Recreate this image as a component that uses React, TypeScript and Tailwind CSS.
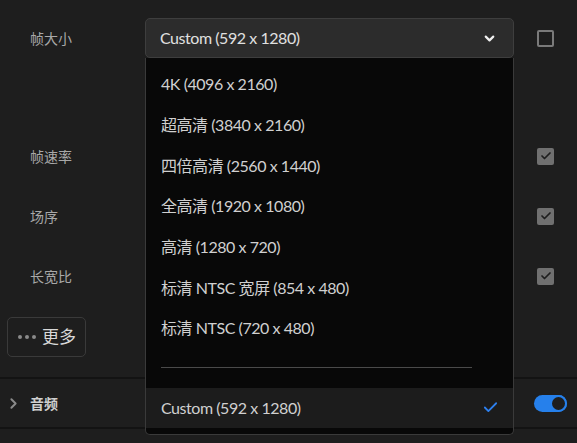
import React from "react";
import { ChevronDown, ChevronRight, Check } from "lucide-react";

const FONT = {
  fontFamily: 'Lato, "Noto Sans CJK SC", sans-serif',
};

const items = [
  "4K (4096 x 2160)",
  "超高清 (3840 x 2160)",
  "四倍高清 (2560 x 1440)",
  "全高清 (1920 x 1080)",
  "高清 (1280 x 720)",
  "标清 NTSC 宽屏 (854 x 480)",
  "标清 NTSC (720 x 480)",
];

function CheckedBox() {
  return (
    <div className="w-[17px] h-[17px] rounded-[2px] bg-[#707070] flex items-center justify-center">
      <Check size={12} strokeWidth={3.5} color="#1e1e1e" />
    </div>
  );
}

function Row({ label, h, children }: { label?: string; h: string; children?: React.ReactNode }) {
  return (
    <div className={`flex items-center ${h}`}>
      <div className="w-[145px] pl-[30px] text-[14px] text-[#a8a8a8]">{label}</div>
      <div className="flex-1" />
      <div className="w-[63px] pl-[23px]">{children}</div>
    </div>
  );
}

export default function App() {
  return (
    <div className="relative w-[577px] h-[443px] bg-[#1e1e1e] overflow-hidden" style={FONT}>
      <div className="flex flex-col">
        <div className="flex items-center h-[76px]">
          <div className="w-[145px] pl-[30px] text-[14px] text-[#a8a8a8]">帧大小</div>
          <div className="w-[369px] h-[40px] rounded-[5px] bg-[#2c2c2c] border border-[#3e3e3e] flex items-center pl-[14px] pr-[16px]">
            <span className="flex-1 text-[16px] tracking-[-0.45px] text-[#e0e0e0]">Custom (592 x 1280)</span>
            <ChevronDown size={15} strokeWidth={3.5} color="#f0f0f0" />
          </div>
          <div className="pl-[23px]">
            <div className="w-[17px] h-[17px] rounded-[2px] border-2 border-[#7a7a7a]" />
          </div>
        </div>
        <div className="h-[50px]" />
        <Row label="帧速率" h="h-[60px]"><CheckedBox /></Row>
        <Row label="场序" h="h-[60px]"><CheckedBox /></Row>
        <Row label="长宽比" h="h-[60px]"><CheckedBox /></Row>
        <div className="h-[71px] flex items-start pt-[11px] pl-[7px]">
          <div className="h-[40px] w-[79px] rounded-[5px] border border-[#3a3a3a] flex items-center pl-[10px] gap-[6px]">
            <div className="flex gap-[3px]">
              <span className="w-[4px] h-[4px] rounded-full bg-[#8a8a8a]" />
              <span className="w-[4px] h-[4px] rounded-full bg-[#8a8a8a]" />
              <span className="w-[4px] h-[4px] rounded-full bg-[#8a8a8a]" />
            </div>
            <span className="text-[17px] text-[#d8d8d8]">更多</span>
          </div>
        </div>
        <div className="h-[2px] bg-[#131313]" />
        <div className="h-[48px] flex items-center">
          <div className="w-[30px] pl-[5px]">
            <ChevronRight size={17} strokeWidth={2.75} color="#8a8a8a" />
          </div>
          <span className="flex-1 text-[14px] font-bold text-[#cfcfcf]">音频</span>
          <div className="mr-[10px] w-[33px] h-[17px] rounded-full bg-[#2680eb] flex items-center justify-end">
            <div className="w-[17px] h-[17px] rounded-full bg-[#1e1e1e] border-2 border-[#2680eb]" />
          </div>
        </div>
        <div className="h-[2px] bg-[#131313]" />
      </div>

      <div className="absolute left-[145px] top-[58px] w-[369px] h-[377px] bg-[#080808] border border-[#3a3a3a] border-t-0 rounded-b-[5px] pt-[6px]">
        {items.map((t) => (
          <div key={t} className="h-[40.7px] flex items-center pl-[15px] text-[16px] tracking-[-0.45px] text-[#d0d0d0]">
            {t}
          </div>
        ))}
        <div className="mx-[15px] mt-[18px] mb-[20px] h-[1px] bg-[#4a4a4a] w-[311px]" />
        <div className="h-[40px] bg-[#1c1c1c] flex items-center pl-[15px] pr-[14px] text-[16px] tracking-[-0.45px] text-[#d0d0d0]">
          <span className="flex-1">Custom (592 x 1280)</span>
          <Check size={17} strokeWidth={2.5} color="#2d80f0" />
        </div>
      </div>
    </div>
  );
}
